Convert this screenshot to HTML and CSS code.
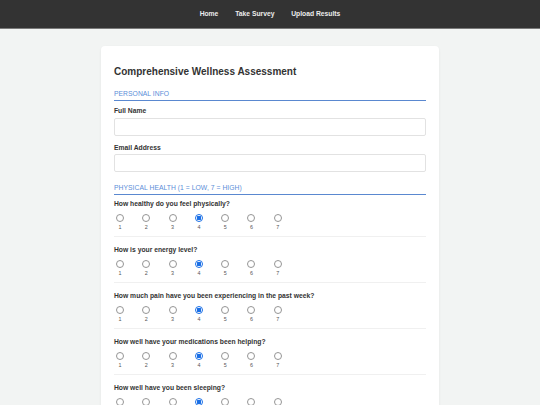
FILE: index.html
```html
<!DOCTYPE html>
<html lang="en">
<head>
<meta charset="utf-8">
<title>Comprehensive Wellness Assessment</title>
<link rel="stylesheet" href="styles.css">
</head>
<body>
<nav class="topnav">
  <a class="nav-link" href="#">Home</a>
  <a class="nav-link" href="#">Take Survey</a>
  <a class="nav-link" href="#">Upload Results</a>
</nav>
<main class="card">
  <h1 class="title">Comprehensive Wellness Assessment</h1>

  <h2 class="section-head">Personal Info</h2>
  <label class="field-label" for="fullname">Full Name</label>
  <input class="text-input" id="fullname" type="text">
  <label class="field-label" for="email">Email Address</label>
  <input class="text-input" id="email" type="email">

  <h2 class="section-head section-gap">Physical Health (1 = Low, 7 = High)</h2>

  <div class="question">
    <div class="q-text">How healthy do you feel physically?</div>
    <div class="scale">
      <label class="opt"><input type="radio" name="q1"><span>1</span></label>
      <label class="opt"><input type="radio" name="q1"><span>2</span></label>
      <label class="opt"><input type="radio" name="q1"><span>3</span></label>
      <label class="opt"><input type="radio" name="q1" checked><span>4</span></label>
      <label class="opt"><input type="radio" name="q1"><span>5</span></label>
      <label class="opt"><input type="radio" name="q1"><span>6</span></label>
      <label class="opt"><input type="radio" name="q1"><span>7</span></label>
    </div>
  </div>

  <div class="question">
    <div class="q-text">How is your energy level?</div>
    <div class="scale">
      <label class="opt"><input type="radio" name="q2"><span>1</span></label>
      <label class="opt"><input type="radio" name="q2"><span>2</span></label>
      <label class="opt"><input type="radio" name="q2"><span>3</span></label>
      <label class="opt"><input type="radio" name="q2" checked><span>4</span></label>
      <label class="opt"><input type="radio" name="q2"><span>5</span></label>
      <label class="opt"><input type="radio" name="q2"><span>6</span></label>
      <label class="opt"><input type="radio" name="q2"><span>7</span></label>
    </div>
  </div>

  <div class="question">
    <div class="q-text">How much pain have you been experiencing in the past week?</div>
    <div class="scale">
      <label class="opt"><input type="radio" name="q3"><span>1</span></label>
      <label class="opt"><input type="radio" name="q3"><span>2</span></label>
      <label class="opt"><input type="radio" name="q3"><span>3</span></label>
      <label class="opt"><input type="radio" name="q3" checked><span>4</span></label>
      <label class="opt"><input type="radio" name="q3"><span>5</span></label>
      <label class="opt"><input type="radio" name="q3"><span>6</span></label>
      <label class="opt"><input type="radio" name="q3"><span>7</span></label>
    </div>
  </div>

  <div class="question">
    <div class="q-text">How well have your medications been helping?</div>
    <div class="scale">
      <label class="opt"><input type="radio" name="q4"><span>1</span></label>
      <label class="opt"><input type="radio" name="q4"><span>2</span></label>
      <label class="opt"><input type="radio" name="q4"><span>3</span></label>
      <label class="opt"><input type="radio" name="q4" checked><span>4</span></label>
      <label class="opt"><input type="radio" name="q4"><span>5</span></label>
      <label class="opt"><input type="radio" name="q4"><span>6</span></label>
      <label class="opt"><input type="radio" name="q4"><span>7</span></label>
    </div>
  </div>

  <div class="question">
    <div class="q-text">How well have you been sleeping?</div>
    <div class="scale">
      <label class="opt"><input type="radio" name="q5"><span>1</span></label>
      <label class="opt"><input type="radio" name="q5"><span>2</span></label>
      <label class="opt"><input type="radio" name="q5"><span>3</span></label>
      <label class="opt"><input type="radio" name="q5" checked><span>4</span></label>
      <label class="opt"><input type="radio" name="q5"><span>5</span></label>
      <label class="opt"><input type="radio" name="q5"><span>6</span></label>
      <label class="opt"><input type="radio" name="q5"><span>7</span></label>
    </div>
  </div>
</main>
</body>
</html>
```

FILE: styles.css
```css
* {
  box-sizing: border-box;
}

html, body {
  margin: 0;
  padding: 0;
}

body {
  background: #f2f4f3;
  font-family: "Liberation Sans", Arial, sans-serif;
  color: #333;
}

.topnav {
  height: 29px;
  background: #333;
  border-bottom: 1px solid #7a7a7a;
  display: flex;
  justify-content: center;
  align-items: center;
}

.nav-link {
  color: #ececec;
  text-decoration: none;
  font-size: 6.75px;
  font-weight: bold;
  line-height: 8px;
  padding: 0 8.4px;
}

.card {
  width: 338px;
  margin: 17px auto 0;
  background: #fff;
  border-radius: 4px;
  box-shadow: 0 1px 3px rgba(0, 0, 0, 0.06);
  padding: 20px 13px 20px;
}

.title {
  margin: 0 0 11.5px;
  font-size: 10px;
  line-height: 12px;
  font-weight: bold;
  color: #333;
}

.section-head {
  margin: 0;
  font-size: 6.75px;
  line-height: 8px;
  font-weight: normal;
  letter-spacing: 0.05px;
  text-transform: uppercase;
  color: #5b8ed8;
  padding-bottom: 2.5px;
  border-bottom: 1px solid #5a88d0;
}

.section-gap {
  margin-top: 11.4px;
}

.field-label {
  display: block;
  margin-top: 6.4px;
  font-size: 6.75px;
  line-height: 8px;
  font-weight: bold;
  color: #333;
}

.text-input {
  display: block;
  width: 100%;
  height: 18px;
  margin: 2.6px 0 0;
  border: 1px solid #e2e2e2;
  border-radius: 2px;
  background: #fff;
  padding: 0 5px;
  font-family: inherit;
  font-size: 6.75px;
}

.text-input + .field-label {
  margin-top: 7.9px;
}

.question {
  margin-top: 5px;
  padding-bottom: 6.2px;
  border-bottom: 1px solid #f0f0f0;
}

.question + .question {
  margin-top: 9.4px;
}

.q-text {
  font-size: 6.75px;
  line-height: 8px;
  font-weight: bold;
  color: #333;
}

.scale {
  display: flex;
  gap: 14.3px;
  margin-top: 5.8px;
}

.opt {
  width: 12px;
  display: flex;
  flex-direction: column;
  align-items: center;
}

.opt input {
  -webkit-appearance: none;
  appearance: none;
  width: 8px;
  height: 8px;
  margin: 0;
  border: 1px solid #959595;
  border-radius: 50%;
  background: #fff;
}

.opt input:checked {
  border-color: #1a6fe6;
  background: radial-gradient(circle, #1a6fe6 0 2.1px, #fff 2.5px);
}

.opt span {
  margin-top: 1.6px;
  font-size: 5.4px;
  line-height: 6px;
  color: #555;
}
```
